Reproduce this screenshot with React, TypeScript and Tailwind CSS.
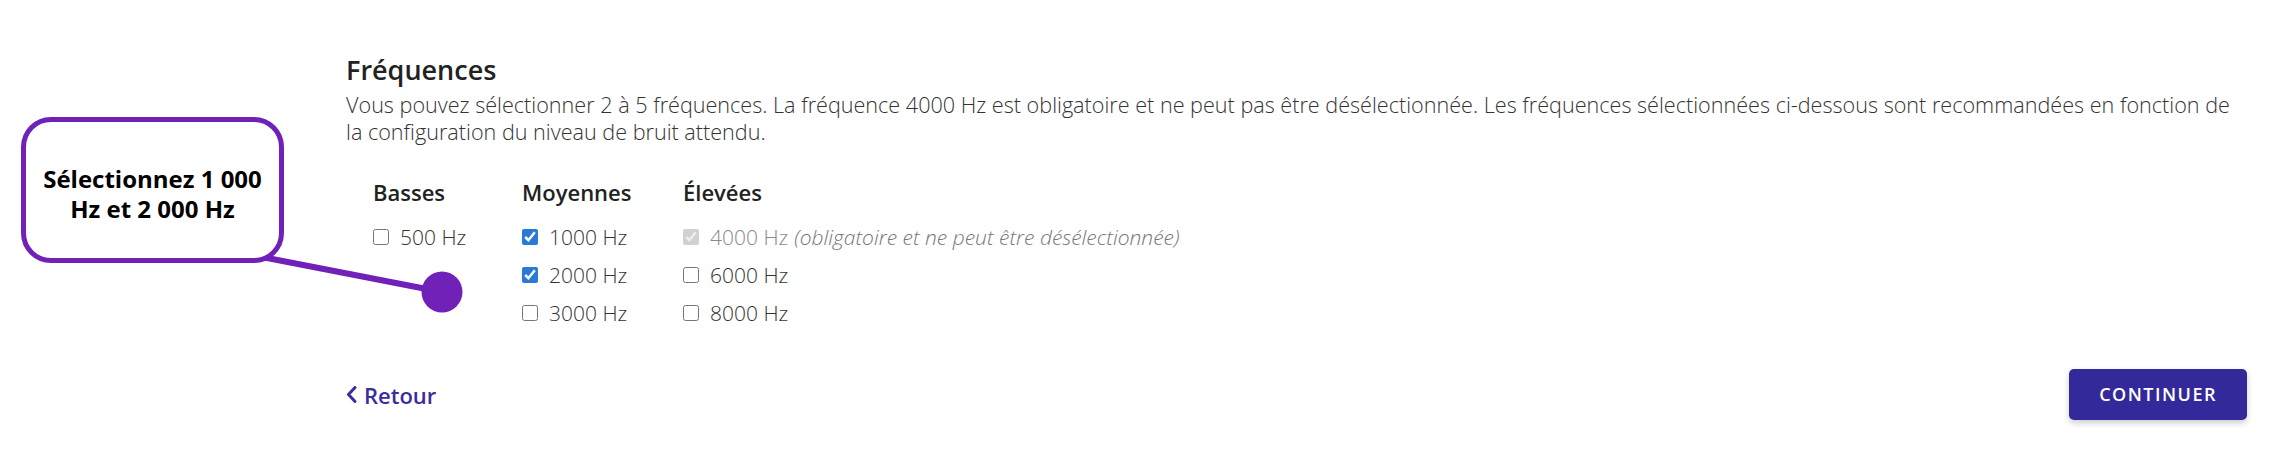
import { ReactNode } from "react";

type Freq = { label: string; checked?: boolean; disabled?: boolean; note?: string };

const columns: { title: string; width: string; items: Freq[] }[] = [
  { title: "Basses", width: "w-[149px]", items: [{ label: "500 Hz" }] },
  {
    title: "Moyennes",
    width: "w-[161px]",
    items: [
      { label: "1000 Hz", checked: true },
      { label: "2000 Hz", checked: true },
      { label: "3000 Hz" },
    ],
  },
  {
    title: "Élevées",
    width: "w-auto",
    items: [
      {
        label: "4000 Hz",
        checked: true,
        disabled: true,
        note: "(obligatoire et ne peut être désélectionnée)",
      },
      { label: "6000 Hz" },
      { label: "8000 Hz" },
    ],
  },
];

function FreqRow({ item }: { item: Freq }) {
  return (
    <label className="flex h-[38px] items-center gap-[11px] text-[21px] font-light leading-[38px] whitespace-nowrap">
      <input
        type="checkbox"
        defaultChecked={item.checked}
        disabled={item.disabled}
        className="h-4 w-4 shrink-0 accent-[#2b79d6]"
      />
      <span className={item.disabled ? "text-[#8a8a8a]" : "text-[#333333]"}>
        {item.label}
        {item.note && <em className="ml-[6px] text-[#777777]">{item.note}</em>}
      </span>
    </label>
  );
}

function Callout({ children }: { children: ReactNode }) {
  return (
    <div className="pointer-events-none absolute left-0 top-0">
      <svg className="absolute left-0 top-0" width="480" height="330">
        <line x1="262" y1="257" x2="442" y2="292" stroke="#6f21b8" strokeWidth="6" />
        <circle cx="442" cy="292" r="20.5" fill="#6f21b8" />
      </svg>
      <div className="absolute left-[21px] top-[117px] flex h-[146px] w-[263px] items-center justify-center rounded-[30px] border-[5px] border-[#6f21b8] bg-white pt-[8px] text-center text-[24px] font-bold leading-[30px] text-black">
        {children}
      </div>
    </div>
  );
}

export default function App() {
  return (
    <div
      className="relative h-[453px] w-full overflow-hidden bg-white"
      style={{ fontFamily: '"Open Sans", "Noto Sans", sans-serif' }}
    >
      <div className="flex flex-col pl-[346px] pr-[39px] pt-[52px]">
        <h2 className="text-[27px] font-semibold leading-[36px] text-[#222222]">Fréquences</h2>
        <p className="mt-[3px] text-[21.6px] font-light leading-[27px] text-[#333333]">
          Vous pouvez sélectionner 2 à 5 fréquences. La fréquence 4000 Hz est obligatoire et ne
          peut pas être désélectionnée. Les fréquences sélectionnées ci-dessous sont recommandées en
          fonction de la configuration du niveau de bruit attendu.
        </p>

        <div className="mt-[32px] flex pl-[27px]">
          {columns.map((col) => (
            <div key={col.title} className={`${col.width} flex flex-col`}>
              <div className="mb-[11px] text-[22px] font-semibold leading-[30px] text-[#222222]">
                {col.title}
              </div>
              {col.items.map((item) => (
                <FreqRow key={item.label} item={item} />
              ))}
            </div>
          ))}
        </div>

        <div className="mt-[37px] flex items-center justify-between">
          <button className="flex items-center gap-[7px] text-[22px] font-semibold leading-[30px] text-[#3a2d9e]">
            <svg width="11" height="17" viewBox="0 0 11 17" fill="none">
              <polyline
                points="9,1.5 2.5,8.5 9,15.5"
                stroke="#3a2d9e"
                strokeWidth="3"
                strokeLinecap="round"
                strokeLinejoin="round"
              />
            </svg>
            Retour
          </button>
          <button className="h-[51px] rounded-[5px] bg-[#33299a] px-[30px] text-[18px] font-semibold tracking-[1.5px] text-white shadow-[0_3px_6px_rgba(0,0,0,0.2)]">
            CONTINUER
          </button>
        </div>
      </div>

      <Callout>
        Sélectionnez 1 000
        <br />
        Hz et 2 000 Hz
      </Callout>
    </div>
  );
}
